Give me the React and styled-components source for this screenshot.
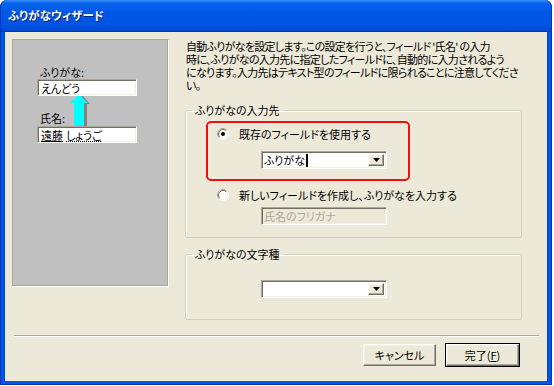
import styled, { createGlobalStyle } from "styled-components";

const GlobalStyle = createGlobalStyle`
    html, body {
        margin: 0;
        padding: 0;
        background: #ffffff;
    }
    body {
        font-family: "Noto Sans CJK JP", "Liberation Sans", sans-serif;
        font-feature-settings: "palt";
        font-size: 11px;
        color: #000000;
    }
`

const sunken = `
    border: 1px solid;
    border-color: #aca899 #ffffff #ffffff #aca899;
    box-shadow: inset 1px 1px 0 #716f64, inset -1px -1px 0 #f1efe2;
`

const raised = `
    border: 1px solid;
    border-color: #ffffff #716f64 #716f64 #ffffff;
    box-shadow: inset -1px -1px 0 #aca899, inset 1px 1px 0 #f1efe2;
`

function RadioMark({ checked }) {
    return (
        <StyledRadioSvg width="12" height="12" viewBox="0 0 12 12">
            <circle cx="6" cy="6" r="5" fill="#ffffff" />
            <path d="M2.11 9.89 A5.5 5.5 0 0 1 9.89 2.11" fill="none" stroke="#aca899" />
            <path d="M9.89 2.11 A5.5 5.5 0 0 1 2.11 9.89" fill="none" stroke="#ffffff" />
            <path d="M2.82 9.18 A4.5 4.5 0 0 1 9.18 2.82" fill="none" stroke="#716f64" />
            <path d="M9.18 2.82 A4.5 4.5 0 0 1 2.82 9.18" fill="none" stroke="#f1efe2" />
            {checked && <circle cx="6" cy="6" r="2" fill="#000000" />}
        </StyledRadioSvg>
    )
}

function ArrowUp() {
    return (
        <svg width="24" height="36" viewBox="0 0 24 36">
            <polygon points="13,2 21,11 18,11 18,36 8,36 8,11 5,11" fill="#808080" />
            <polygon points="10,1 19,10 15,10 15,35 5,35 5,10 1,10" fill="#00ffff" />
        </svg>
    )
}

function Combo({ children, caret }) {
    return (
        <StyledCombo>
            <StyledComboText>
                {children}
                {caret && <StyledCaret />}
            </StyledComboText>
            <StyledDropButton>
                <svg width="7" height="4" viewBox="0 0 7 4">
                    <polygon points="0,0 7,0 3.5,4" fill="#000000" />
                </svg>
            </StyledDropButton>
        </StyledCombo>
    )
}

export default function App () {
    return (
        <>
            <GlobalStyle />
            <StyledWindow>
                <StyledTitleBar>ふりがなウィザード</StyledTitleBar>
                <StyledClient>
                    <StyledBody>
                        <StyledPreview>
                            <StyledPreviewLabel>ふりがな:</StyledPreviewLabel>
                            <StyledPreviewBox>えんどう</StyledPreviewBox>
                            <StyledArrow><ArrowUp /></StyledArrow>
                            <StyledPreviewLabel gap={16}>氏名:</StyledPreviewLabel>
                            <StyledPreviewBox gap={1}>
                                <StyledClause>遠藤</StyledClause>
                                <StyledClause dotted>しょうご</StyledClause>
                            </StyledPreviewBox>
                        </StyledPreview>
                        <StyledSettings>
                            <StyledDescription>
                                自動ふりがなを設定します。この設定を行うと、フィールド '氏名' の入力<br />
                                時に、ふりがなの入力先に指定したフィールドに、自動的に入力されるよう<br />
                                になります。入力先はテキスト型のフィールドに限られることに注意してくださ<br />
                                い。
                            </StyledDescription>
                            <StyledGroup>
                                <legend>ふりがなの入力先</legend>
                                <StyledGroupContent top={4} left={20}>
                                    <StyledOption highlighted>
                                        <StyledRadioRow>
                                            <RadioMark checked />
                                            <span>既存のフィールドを使用する</span>
                                        </StyledRadioRow>
                                        <StyledOptionField gap={10}>
                                            <Combo caret>ふりがな</Combo>
                                        </StyledOptionField>
                                    </StyledOption>
                                    <StyledOption>
                                        <StyledRadioRow>
                                            <RadioMark />
                                            <span>新しいフィールドを作成し、ふりがなを入力する</span>
                                        </StyledRadioRow>
                                        <StyledOptionField gap={5}>
                                            <StyledDisabledBox>氏名のフリガナ</StyledDisabledBox>
                                        </StyledOptionField>
                                    </StyledOption>
                                </StyledGroupContent>
                            </StyledGroup>
                            <StyledGroup gap={9}>
                                <legend>ふりがなの文字種</legend>
                                <StyledGroupContent top={19} bottom={21} left={75}>
                                    <Combo />
                                </StyledGroupContent>
                            </StyledGroup>
                        </StyledSettings>
                    </StyledBody>
                    <StyledSeparator />
                    <StyledFooter>
                        <StyledButton>キャンセル</StyledButton>
                        <StyledButton isDefault>完了(<u>F</u>)</StyledButton>
                    </StyledFooter>
                </StyledClient>
            </StyledWindow>
        </>
    )
}

const StyledWindow = styled.div`
    width: 552px;
    height: 385px;
    display: flex;
    flex-direction: column;
`
const StyledTitleBar = styled.div`
    height: 31px;
    flex-shrink: 0;
    box-sizing: border-box;
    padding: 0 0 1px 8px;
    display: flex;
    align-items: center;
    border-radius: 7px 7px 0 0;
    background: linear-gradient(#3d95ff 0, #0a63ec 3px, #0058e6 40%, #0054e3 80%, #0049d4 100%);
    box-shadow: inset 1px 0 0 #0037b0, inset -1px 0 0 #0037b0;
    color: #ffffff;
    font-size: 11.5px;
    font-weight: 700;
    text-shadow: 1px 1px 0 #0a1e6b;
`
const StyledClient = styled.div`
    flex: 1;
    display: flex;
    flex-direction: column;
    background-color: #ece9d8;
    border: 4px solid #0055e5;
    border-top: none;
    box-shadow: inset 1px 0 0 #0046c8, inset -1px 0 0 #0046c8;
    outline: 1px solid #0037b0;
    outline-offset: -1px;
`
const StyledBody = styled.div`
    display: flex;
    gap: 16px;
    height: 304px;
    box-sizing: border-box;
    padding: 8px 0 0 8px;
`
const StyledPreview = styled.div`
    position: relative;
    width: 157px;
    height: 248px;
    box-sizing: border-box;
    padding: 26px 0 0 24px;
    background-color: #c0c0c0;
    border: 1px solid;
    border-color: #aca899 #ffffff #ffffff #aca899;
    box-shadow: inset -1px -1px 0 #aca899;
`
const StyledPreviewLabel = styled.div`
    height: 13px;
    line-height: 13px;
    margin-top: ${({gap}) => gap || 0}px;
    padding-left: 3px;
`
const StyledPreviewBox = styled.div`
    position: relative;
    z-index: 1;
    width: 100px;
    height: 17px;
    margin-top: ${({gap}) => gap || 0}px;
    box-sizing: border-box;
    padding: 1px 0 0 3px;
    line-height: 14px;
    background-color: #ffffff;
    ${sunken}
`
const StyledClause = styled.span`
    text-decoration: underline;
    text-decoration-style: ${({dotted}) => dotted ? "dotted" : "solid"};
    text-underline-offset: 1px;
    margin-left: ${({dotted}) => dotted ? "3px" : "0"};
`
const StyledArrow = styled.div`
    position: absolute;
    left: 56px;
    top: 53px;
    line-height: 0;
`
const StyledSettings = styled.div`
    width: 337px;
    padding-top: 1px;
`
const StyledDescription = styled.div`
    padding-left: 1px;
    line-height: 13px;
    white-space: nowrap;
    letter-spacing: -0.7px;
`
const StyledGroup = styled.fieldset`
    margin: ${({gap}) => gap || 11}px 0 0 0;
    padding: 0;
    border: 1px solid #d0d0bf;
    border-radius: 2px;
    box-shadow: inset 1px 1px 0 #ffffff;

    legend {
        margin-left: 6px;
        padding: 0 3px;
        line-height: 14px;
        height: 14px;
    }
`
const StyledGroupContent = styled.div`
    display: flex;
    flex-direction: column;
    align-items: flex-start;
    padding: ${({top}) => top || 0}px 0 ${({bottom}) => bottom || 0}px ${({left}) => left || 0}px;
`
const StyledOption = styled.div`
    width: 204px;
    box-sizing: border-box;
    margin-top: ${({highlighted}) => highlighted ? 0 : 1}px;
    padding: 4px 0 10px 9px;
    border: 2px solid ${({highlighted}) => highlighted ? "#f01010" : "transparent"};
    border-radius: 5px;
`
const StyledRadioRow = styled.div`
    display: flex;
    align-items: center;
    gap: 10px;
    height: 14px;
    line-height: 14px;
    white-space: nowrap;
`
const StyledRadioSvg = styled.svg`
    flex-shrink: 0;
`
const StyledOptionField = styled.div`
    margin-top: ${({gap}) => gap}px;
    padding-left: 44px;
`
const StyledCombo = styled.div`
    display: flex;
    align-items: stretch;
    width: 126px;
    height: 18px;
    box-sizing: border-box;
    padding: 2px;
    background-color: #ffffff;
    ${sunken}
`
const StyledComboText = styled.div`
    flex: 1;
    display: flex;
    align-items: center;
    line-height: 14px;
`
const StyledCaret = styled.span`
    width: 2px;
    height: 13px;
    margin-left: 1px;
    background-color: #000000;
`
const StyledDropButton = styled.div`
    width: 16px;
    box-sizing: border-box;
    display: flex;
    align-items: center;
    justify-content: center;
    background-color: #ece9d8;
    ${raised}
`
const StyledDisabledBox = styled.div`
    width: 126px;
    height: 18px;
    box-sizing: border-box;
    padding: 1px 0 0 2px;
    line-height: 14px;
    color: #aca899;
    background-color: #ece9d8;
    ${sunken}
`
const StyledSeparator = styled.div`
    height: 1px;
    margin: 0 9px 0 10px;
    background-color: #aca899;
    border-bottom: 1px solid #ffffff;
`
const StyledFooter = styled.div`
    display: flex;
    justify-content: flex-end;
    gap: 10px;
    padding: 7px 29px 0 0;
`
const StyledButton = styled.button`
    width: 73px;
    height: 22px;
    box-sizing: border-box;
    padding: 0;
    font-family: inherit;
    font-feature-settings: "palt";
    font-size: 11px;
    color: #000000;
    background-color: #ece9d8;
    ${raised}
    outline: ${({isDefault}) => isDefault ? "1px solid #000000" : "none"};
    outline-offset: 0;

    u {
        text-underline-offset: 1px;
    }
`
